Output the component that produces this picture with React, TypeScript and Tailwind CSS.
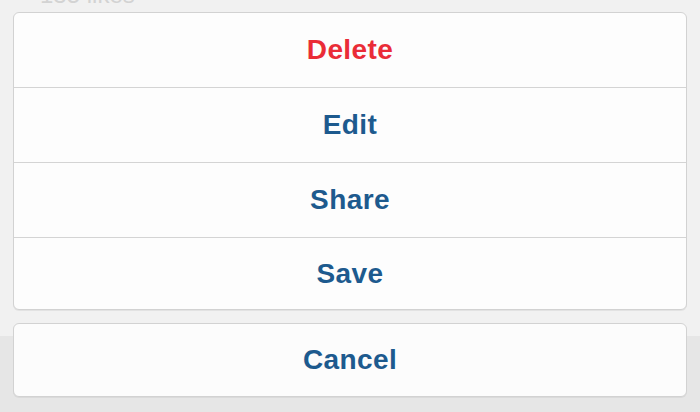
import React from "react";

const ACTIONS = [
  { label: "Delete", danger: true, h: "h-[74px]" },
  { label: "Edit", danger: false, h: "h-[75px]" },
  { label: "Share", danger: false, h: "h-[75px]" },
  { label: "Save", danger: false, h: "h-[72px]" },
];

export default function App() {
  return (
    <div
      className="relative h-[412px] w-[700px] overflow-hidden bg-[linear-gradient(#f1f1f1_336px,#e6e6e6_336px)]"
      style={{ fontFamily: '"Liberation Sans", Arial, sans-serif' }}
    >
      {/* faded post text behind the sheet */}
      <div className="h-[12px] overflow-hidden pl-[40px]">
        <div className="-mt-[19px] text-[24px] leading-[28px] text-[#d3d3d3]">
          135 likes
        </div>
      </div>

      <div className="flex flex-col gap-[13px] px-[13px]">
        {/* Action group */}
        <div className="flex flex-col overflow-hidden rounded-[6px] border border-[#d2d2d2] bg-[#fdfdfd] shadow-[0_1px_0_#e2e2e2]">
          {ACTIONS.map((a, i) => (
            <button
              key={a.label}
              className={`flex ${a.h} items-center justify-center text-[28px] font-bold tracking-[0.4px] ${
                i > 0 ? "border-t border-[#d4d4d4]" : ""
              } ${a.danger ? "text-[#ea2c37]" : "text-[#1d5a8e]"}`}
            >
              {a.label}
            </button>
          ))}
        </div>

        {/* Cancel */}
        <div className="overflow-hidden rounded-[6px] border border-[#d2d2d2] bg-[#fcfcfc] shadow-[0_1px_0_#dadada]">
          <button className="flex h-[72px] w-full items-center justify-center text-[28px] font-bold tracking-[0.4px] text-[#1d5a8e]">
            Cancel
          </button>
        </div>
      </div>
    </div>
  );
}
